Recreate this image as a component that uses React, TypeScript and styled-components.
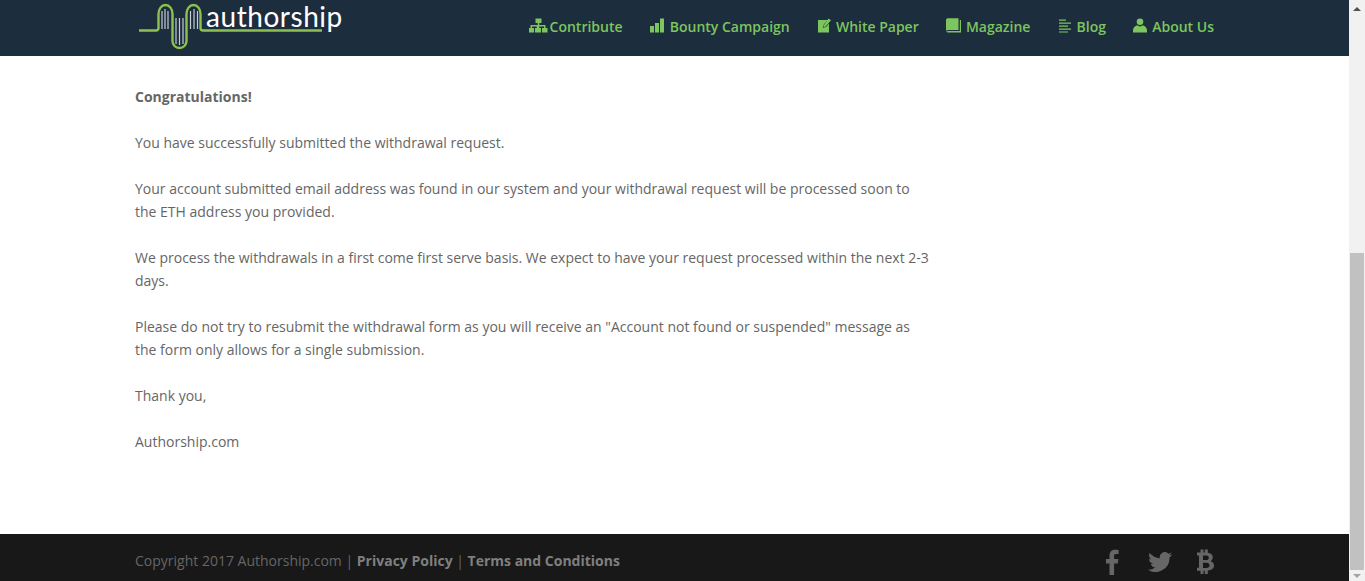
import React from "react";
import styled, { createGlobalStyle } from "styled-components";

const Global = createGlobalStyle`
  html, body { margin: 0; padding: 0; height: 100%; overflow: hidden; background: #fff; }
  #root { height: 100%; }
  * { box-sizing: border-box; }
`;

const Viewport = styled.div`
  display: flex;
  width: 1365px;
  height: 581px;
  overflow: hidden;
  font-family: "Open Sans", "Liberation Sans", sans-serif;
`;
const Page = styled.div`
  flex: 1;
  min-width: 0;
  display: flex;
  flex-direction: column;
`;
const Header = styled.header`
  height: 56px;
  flex: none;
  background: #1c2d3e;
  display: flex;
  justify-content: space-between;
  padding: 0 135px;
`;
const LogoWrap = styled.a`
  display: flex;
  align-items: flex-start;
  height: 56px;
  svg { flex: none; overflow: visible; display: block; }
`;
const LogoText = styled.span`
  font-family: "Lato", "Liberation Sans", sans-serif;
  font-size: 28px;
  line-height: 32px;
  color: #fff;
  letter-spacing: 0.55px;
`;
const Nav = styled.nav`
  display: flex;
  gap: 27.2px;
  padding-top: 15px;
  align-items: flex-start;
`;
const NavItem = styled.a`
  display: flex;
  align-items: center;
  gap: 2px;
  height: 23px;
  font-size: 14px;
  font-weight: 600;
  color: #7dc55e;
  white-space: nowrap;
  svg { flex: none; margin-top: -4px; fill: #7dc55e; display: block; }
`;
const Main = styled.main`
  flex: 1;
  padding: 29px 135px 0;
`;
const Article = styled.div`
  width: 797px;
  color: #666;
  font-size: 14px;
  line-height: 23px;
`;
const Para = styled.p`
  margin: 0 0 23px;
`;
const Footer = styled.footer`
  height: 47px;
  flex: none;
  background: #181818;
  display: flex;
  justify-content: space-between;
  align-items: flex-start;
  padding: 15px 135px 0;
`;
const Copy = styled.div`
  font-size: 14px;
  line-height: 23px;
  color: #666;
`;
const FootLink = styled.a`
  font-weight: 700;
  color: #7f7f7f;
`;
const Social = styled.div`
  display: flex;
  align-items: center;
  height: 26px;
  gap: 25px;
  svg { fill: #666; display: block; flex: none; }
`;
const FacebookIcon = styled.svg`
  margin-right: 4px;
`;
const Scrollbar = styled.div`
  width: 16px;
  flex: none;
  background: #f1f1f1;
  display: flex;
  flex-direction: column;
  align-items: center;
`;
const Arrow = styled.div<{ $down?: boolean }>`
  height: ${(p) => (p.$down ? "11px" : "17px")};
  flex: none;
  display: flex;
  align-items: ${(p) => (p.$down ? "flex-start" : "center")};
  padding-top: ${(p) => (p.$down ? "4px" : "0")};
  justify-content: center;
  &::before {
    content: "";
    border-left: 4px solid transparent;
    border-right: 4px solid transparent;
    ${(p) => (p.$down ? "border-top: 4px solid #a3a3a3;" : "border-bottom: 4px solid #505050;")}
  }
`;
const Track = styled.div`
  flex: 1;
  width: 100%;
  display: flex;
  flex-direction: column;
  justify-content: flex-end;
`;
const Thumb = styled.div`
  height: 317px;
  background: #c1c1c1;
  margin: 0 1px;
`;

const Logo = () => (
  <svg width="71" height="56" viewBox="135 0 71 56">
    <path
      d="M139 30.500H156c1.500 0 2.500-1 2.500-2.500V14c0-5 3-9 7-9s7 4 7 9v27c0 4 3 7 7 7s7-3 7-7V14c0-5 3-9 7-9s7 4 7 9v14c0 1.500 1 2.500 2.500 2.500H322"
      fill="none"
      stroke="#8cc152"
      strokeWidth="2.400"
    />
    <path
      d="M162 11v18M165 9v20M168 11v18M176 18v26M179.500 18v27M183 18v26M190.500 11v18M194 9v20M197.500 11v18"
      stroke="#c6ccd2"
      strokeWidth="1.200"
      fill="none"
    />
  </svg>
);

const items: { label: string; w: number; d: string }[] = [
  {
    label: "Contribute",
    w: 19,
    d: "M6.500 1.500h6v4.500h-2.200v2h6.200v3H18.500v4.500h-5.500V11h2v-1.500h-4.700V11h1.700v4.500h-6V11h1.700V9.500H3V11h2v4.500H0V11h1.500V8h7.200V6h-2.200z",
  },
  { label: "Bounty Campaign", w: 18, d: "M0 9h4v6.500H0zM5 6h4v9.500H5zM10 1.500h4v14h-4z" },
  {
    label: "White Paper",
    w: 17,
    d: "M1 3h9.500L6.800 7.500 5.800 11l3.500-1.200L12 6.500v9H1zM11.500 1.500L14 3.300 8.600 9.500l-2 .8.300-2.100z",
  },
  {
    label: "Magazine",
    w: 18,
    d: "M0 3c0-1 .8-1.700 1.800-1.700H12.500v11.700H2.500C1.500 13 .8 13.300 0 13.800zM13.800 3H15v12.500H3c-1.500 0-2.500-.4-2.700-1 .4-.3 1.200-.5 2.200-.5h11.300z",
  },
  { label: "Blog", w: 17, d: "M1 2.500h7v1.300H1zM1 5.500h12v1.300H1zM1 8.500h9v1.300H1zM1 11.500h12v1.300H1zM1 14.500h9v.9H1z" },
  {
    label: "About Us",
    w: 17,
    d: "M7 1.500a3.300 3.300 0 1 1 0 6.600 3.300 3.300 0 0 1 0-6.600zM4.200 8.300C5 9 6 9.500 7 9.500s2-.5 2.800-1.200c2.500.8 4.200 2.500 4.200 5.200v2H0v-2c0-2.700 1.700-4.400 4.200-5.200z",
  },
];

const paragraphs = [
  "You have successfully submitted the withdrawal request.",
  "Your account submitted email address was found in our system and your withdrawal request will be processed soon to the ETH address you provided.",
  "We process the withdrawals in a first come first serve basis. We expect to have your request processed within the next 2-3 days.",
  'Please do not try to resubmit the withdrawal form as you will receive an "Account not found or suspended" message as the form only allows for a single submission.',
  "Thank you,",
  "Authorship.com",
];

export default function App() {
  return (
    <Viewport>
      <Global />
      <Page>
        <Header>
          <LogoWrap>
            <Logo />
            <LogoText>authorship</LogoText>
          </LogoWrap>
          <Nav>
            {items.map(({ label, w, d }) => (
              <NavItem key={label}>
                <svg width={w} height="16" viewBox={`0 0 ${w} 16`}>
                  <path d={d} />
                </svg>
                {label}
              </NavItem>
            ))}
          </Nav>
        </Header>
        <Main>
          <Article>
            <Para>
              <strong>Congratulations!</strong>
            </Para>
            {paragraphs.map((p) => (
              <Para key={p}>{p}</Para>
            ))}
          </Article>
        </Main>
        <Footer>
          <Copy>
            Copyright 2017 Authorship.com | <FootLink>Privacy Policy</FootLink> | <FootLink>Terms and Conditions</FootLink>
          </Copy>
          <Social>
            <FacebookIcon width="13" height="26" viewBox="0 0 13 26">
              <path d="M3.500 26V14.500H0V10H3.500V6.700C3.500 2.800 5.800.800 9.200.800c1.600 0 3 .1 3.400.2v4h-2.300c-1.900 0-2.200.9-2.200 2.200V10h4.300l-.6 4.500H8.100V26z" />
            </FacebookIcon>
            <svg width="24" height="20" viewBox="0 0 24 20">
              <path d="M24 2.400c-.9.400-1.800.7-2.800.8 1-.6 1.800-1.600 2.200-2.700-1 .6-2 1-3.100 1.200A4.900 4.900 0 0 0 11.900 6.200C7.800 6 4.200 4 1.700.9c-1.300 2.200-.6 5.100 1.500 6.500-.8 0-1.600-.2-2.200-.6 0 2.300 1.600 4.500 3.900 5-.7.200-1.500.2-2.200.1.600 2 2.400 3.400 4.600 3.400A9.900 9.900 0 0 1 0 17.800 14 14 0 0 0 21.500 5.400c1-.7 1.800-1.600 2.500-3z" />
            </svg>
            <svg width="17" height="26" viewBox="0 0 17 26">
              <path
                fillRule="evenodd"
                d="M3.500 0.500h3v3h1.300v-3h3v3.300c3 .5 5 2 5 4.500 0 1.800-1 3.100-2.400 3.800 2.300.7 3.600 2.200 3.600 4.500 0 3.100-2.300 4.700-6.200 5v3.400h-3v-3.300H6.500v3.300h-3v-3.300H0v-3h2V6.500H0v-3h3.500zM6 6.500V11.100h3c1.900 0 2.800-.8 2.800-2.300S10.900 6.500 9 6.500zM6 13.700V19h3.400c2 0 3.100-1 3.100-2.700s-1.100-2.600-3.100-2.600z"
              />
            </svg>
          </Social>
        </Footer>
      </Page>
      <Scrollbar>
        <Arrow />
        <Track>
          <Thumb />
        </Track>
        <Arrow $down />
      </Scrollbar>
    </Viewport>
  );
}
